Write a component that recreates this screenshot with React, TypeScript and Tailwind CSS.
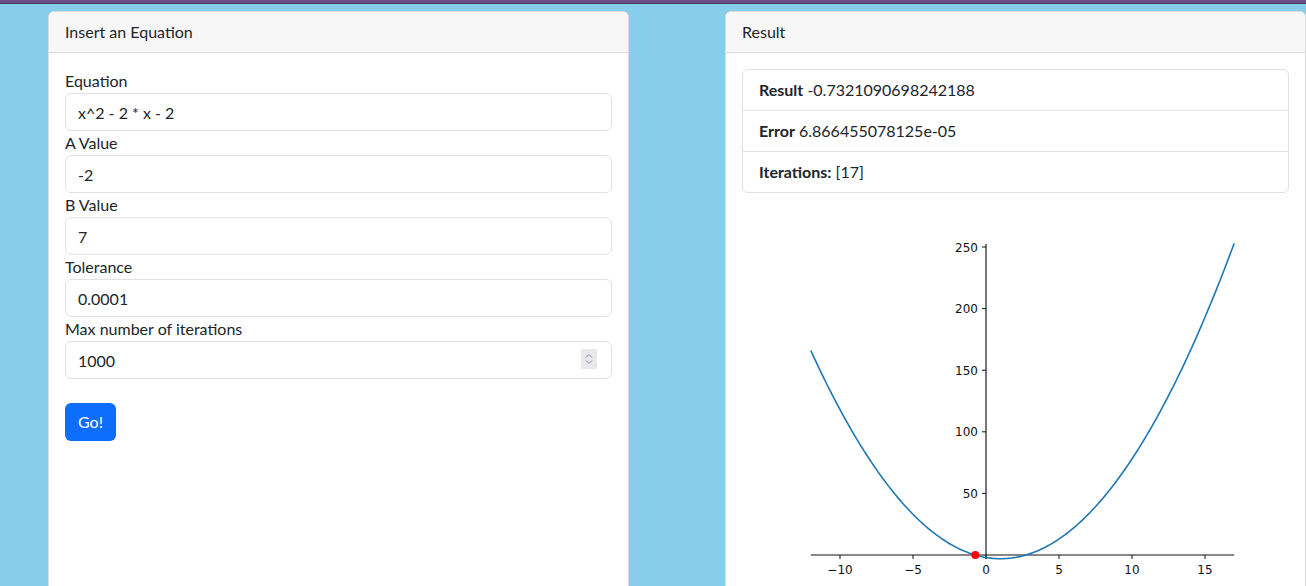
import React from "react";

const font = { fontFamily: "Lato, 'Noto Sans', sans-serif" };

function Field({ label, value, spinner }: { label: string; value: string; spinner?: boolean }) {
  return (
    <div>
      <div className="text-[16px] leading-[24px] text-[#212529]">{label}</div>
      <div className="relative">
        <input
          readOnly
          value={value}
          className="block w-full h-[38px] rounded-[6px] border border-[#dee2e6] bg-white px-[12px] text-[16px] text-[#212529] outline-none"
          style={font}
        />
        {spinner && (
          <div className="absolute right-[15px] top-[8px] w-[16px] h-[20px] bg-[#e9e9ed] flex flex-col items-center justify-center gap-[2px]">
            <svg width="8" height="5" viewBox="0 0 8 5"><path d="M1 4.5 L4 1.5 L7 4.5" fill="none" stroke="#8a8a8a" strokeWidth="1" /></svg>
            <svg width="8" height="5" viewBox="0 0 8 5"><path d="M1 0.5 L4 3.5 L7 0.5" fill="none" stroke="#8a8a8a" strokeWidth="1" /></svg>
          </div>
        )}
      </div>
    </div>
  );
}

function Chart() {
  const ox = 244;
  const oy = 346;
  const sx = 14.6;
  const sy = 1.232;
  const pts: string[] = [];
  for (let i = 0; i <= 200; i++) {
    const x = -12 + (29 * i) / 200;
    const y = x * x - 2 * x - 2;
    pts.push(`${(ox + x * sx).toFixed(2)},${(oy - y * sy).toFixed(2)}`);
  }
  const xt = [-10, -5, 0, 5, 10, 15];
  const yt = [50, 100, 150, 200, 250];
  const lbl = (n: number) => (n < 0 ? "\u2212" + Math.abs(n) : String(n));
  const tf = { fontFamily: "'DejaVu Sans', sans-serif" };
  return (
    <svg width="547" height="380" viewBox="0 0 547 380" className="block mt-[16px]">
      <line x1={ox} y1={35} x2={ox} y2={350} stroke="#555" strokeWidth="1.6" />
      <line x1={ox + -12 * sx} y1={oy} x2={ox + 17 * sx} y2={oy} stroke="#111" strokeWidth="1" />
      {yt.map((v) => (
        <g key={v}>
          <line x1={ox - 4} x2={ox} y1={oy - v * sy} y2={oy - v * sy} stroke="#111" strokeWidth="1" />
          <text x={ox - 8} y={oy - v * sy + 4.5} textAnchor="end" fontSize="12" fill="#111" style={tf}>{v}</text>
        </g>
      ))}
      {xt.map((v) => (
        <g key={v}>
          <line x1={ox + v * sx} x2={ox + v * sx} y1={oy} y2={oy + 4} stroke="#111" strokeWidth="1" />
          <text x={ox + v * sx} y={oy + 19} textAnchor="middle" fontSize="12" fill="#111" style={tf}>{lbl(v)}</text>
        </g>
      ))}
      <polyline points={pts.join(" ")} fill="none" stroke="#1f77b4" strokeWidth="1.6" />
      <circle cx={ox - 0.7321 * sx} cy={oy} r="4" fill="#ff0000" />
    </svg>
  );
}

export default function App() {
  return (
    <div className="w-[1306px] h-[586px] overflow-hidden bg-[#87ceeb] text-[#212529]" style={font}>
      <div className="h-[3px] bg-[#6b4f8b] border-b border-[#4d3c66] box-content" />
      <div className="flex gap-[96px] pl-[48px] pt-[7px]">
        <div className="w-[581px] h-[700px] shrink-0 rounded-[6px] border border-[#dcdcdc] bg-white overflow-hidden">
          <div className="bg-[#f7f7f7] border-b border-[#dcdcdc] px-[16px] py-[8px] text-[16px] leading-[24px]">Insert an Equation</div>
          <div className="p-[16px]">
            <Field label="Equation" value="x^2 - 2 * x - 2" />
            <Field label="A Value" value="-2" />
            <Field label="B Value" value="7" />
            <Field label="Tolerance" value="0.0001" />
            <Field label="Max number of iterations" value="1000" spinner />
            <button className="mt-[24px] h-[38px] px-[13px] rounded-[6px] bg-[#0d6efd] text-white text-[16px] leading-[24px]" style={font}>Go!</button>
          </div>
        </div>
        <div className="w-[581px] h-[700px] shrink-0 rounded-[6px] border border-[#dcdcdc] bg-white overflow-hidden">
          <div className="bg-[#f7f7f7] border-b border-[#dcdcdc] px-[16px] py-[8px] text-[16px] leading-[24px]">Result</div>
          <div className="p-[16px]">
            <div className="rounded-[6px] border border-[#dee2e6] text-[16px] leading-[24px]">
              <div className="px-[16px] py-[8px] border-b border-[#dee2e6]"><b>Result</b> -0.7321090698242188</div>
              <div className="px-[16px] py-[8px] border-b border-[#dee2e6]"><b>Error</b> 6.866455078125e-05</div>
              <div className="px-[16px] py-[8px]"><b>Iterations:</b> [17]</div>
            </div>
            <Chart />
          </div>
        </div>
      </div>
    </div>
  );
}
